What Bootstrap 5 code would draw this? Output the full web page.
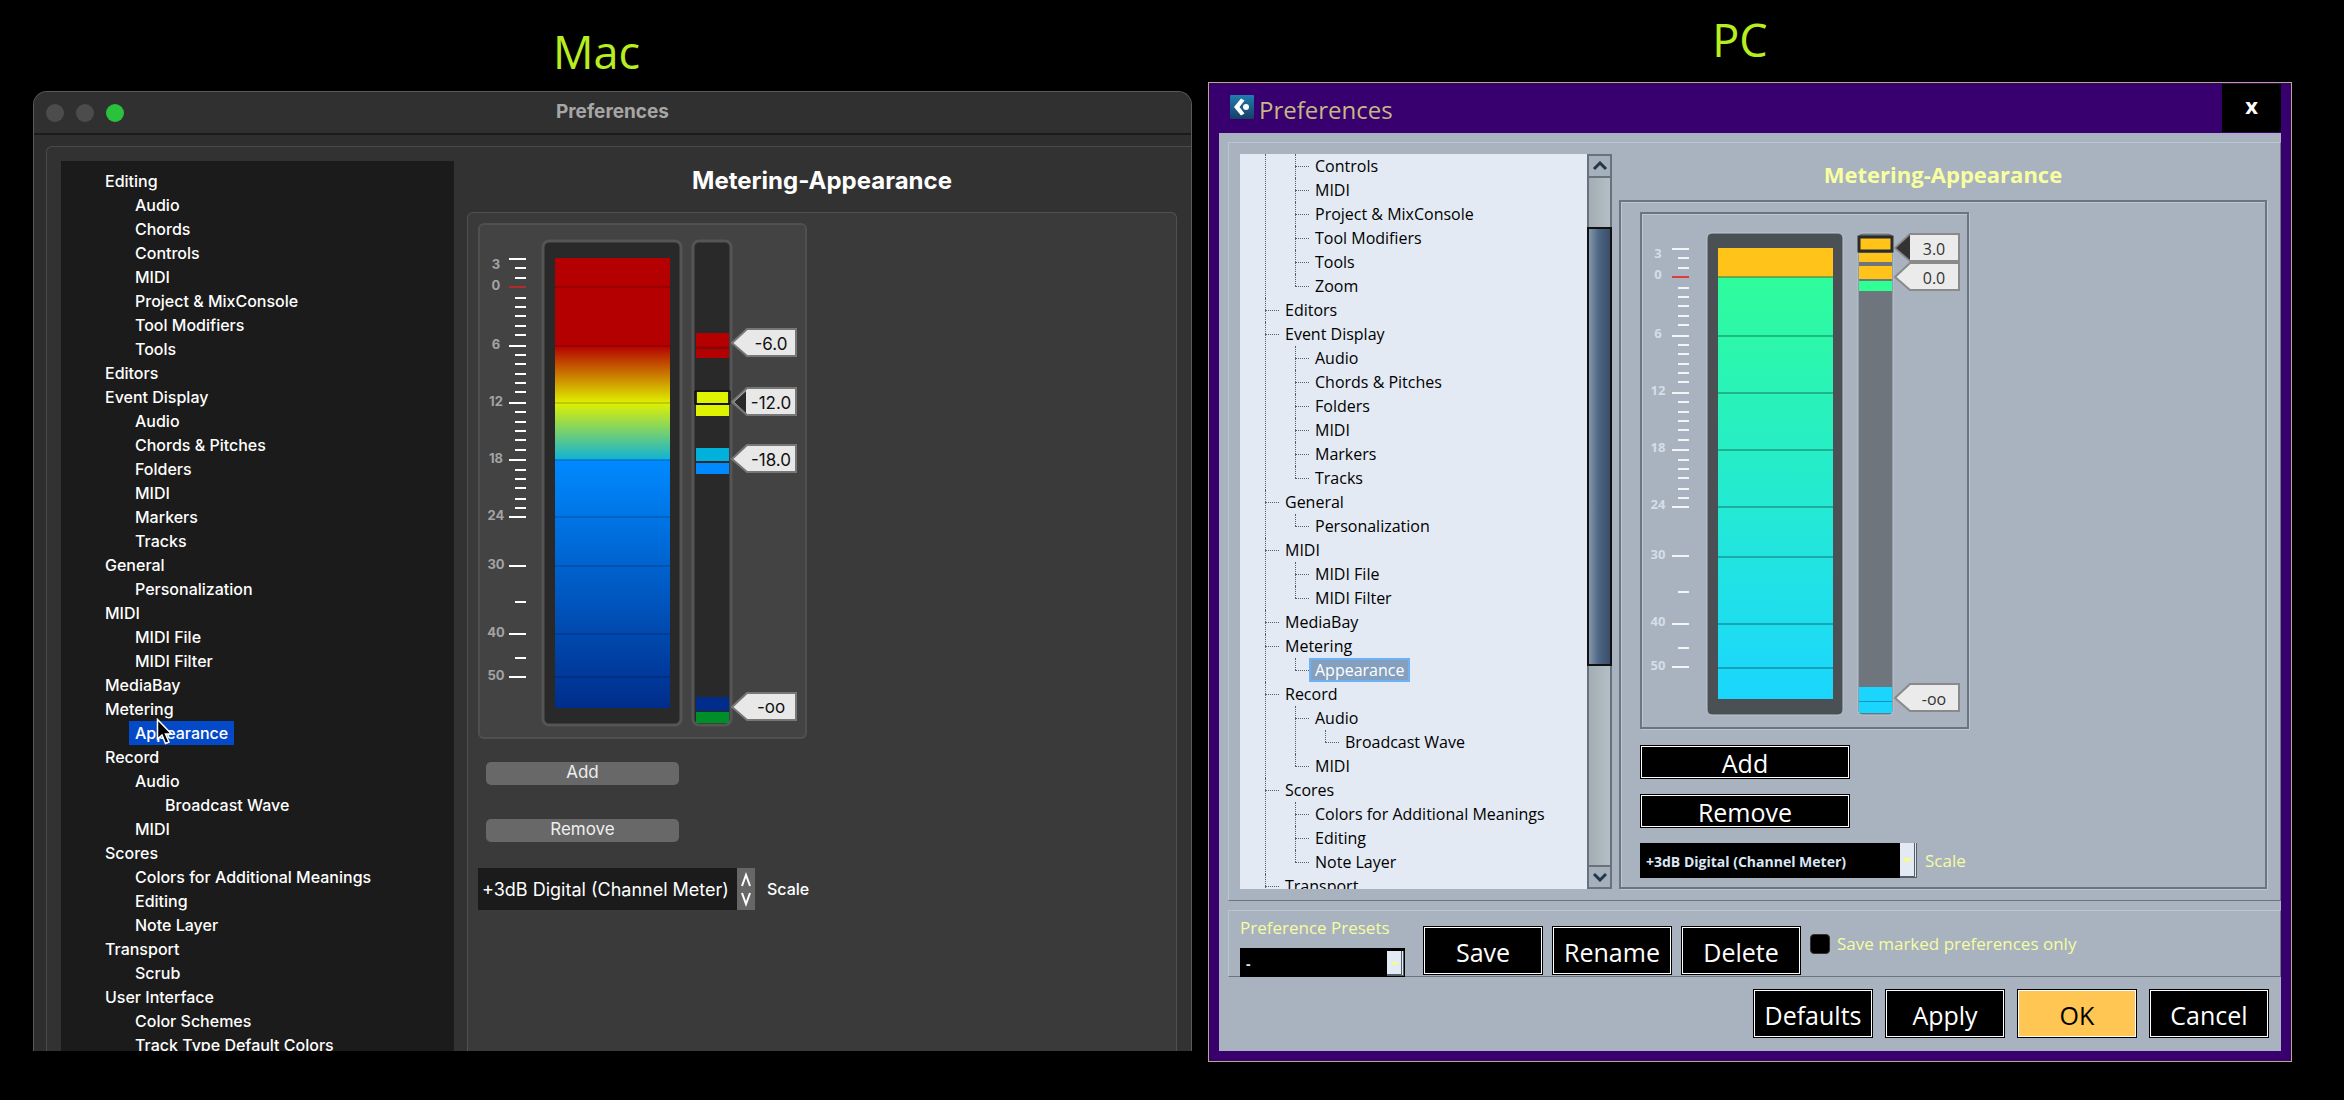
<!DOCTYPE html>
<html lang="en">
<head>
<meta charset="utf-8">
<meta name="viewport" content="width=device-width, initial-scale=1">
<title>Preferences: Mac and PC</title>
<link href="https://cdn.jsdelivr.net/npm/bootstrap@5.3.0/dist/css/bootstrap.min.css" rel="stylesheet">
<script src="https://cdn.jsdelivr.net/npm/bootstrap@5.3.0/dist/js/bootstrap.bundle.min.js"></script>
<style>
body{background:#000;color:#fff;font-family:"Open Sans","Noto Sans",sans-serif;overflow:hidden}
.compare{display:grid;grid-template-columns:1159fr 1084fr;column-gap:16px;padding:0 52px 0 33px;align-items:start}
.os-name{color:#b8ee20;font-size:45px;line-height:60px;margin:0;font-weight:400;text-align:center}
.os-mac .os-name{padding-top:22px;margin-bottom:9px;padding-right:32px}
.os-pc .os-name{padding-top:10px;margin-bottom:12px;padding-right:20px}
ul{list-style:none;margin:0;padding:0}
.tree a{display:inline-block;line-height:24px;height:24px;vertical-align:top;white-space:nowrap;color:inherit;text-decoration:none}
.tree ul{padding-left:30px}

/* Mac window */
.mac-win{font-family:Inter,"Liberation Sans",sans-serif;background:#2e2e2e;border:1px solid #5a5a5a;border-bottom:0;border-radius:14px 14px 0 0;overflow:hidden}
.mac-bar{height:43px;border-bottom:2px solid #1b1b1b;display:grid;grid-template-columns:1fr auto 1fr;align-items:center;padding:0 12px;background:#303030}
.mac-bar h2{font-size:19px;font-weight:700;color:#a6a6a6;margin:0}
.light{width:18px;height:18px;border-radius:50%;background:#4c4c4c;border:0;padding:0}
.light.go{background:#28c23c}
.mac-body{margin:11px 0 0 12px;border:1px solid #4a4a4a;border-right:0;border-bottom:0;border-radius:6px 0 0 0;background:#323232;padding:14px 14px 0 14px}
.mac-tree{width:393px;height:890px;background:#1b1b1b;overflow:hidden;padding:8px 0 0 44px;font-size:16px;font-weight:500}
.mac-tree .picked{background:#0449c8;padding:0 6px;margin-left:-6px}
.mac-pane{margin-left:13px}
.mac-pane h3{font-size:24px;line-height:40px;font-weight:700;margin:0 0 11px;text-align:center}
.mac-panel{border:1px solid #505050;border-bottom:0;border-radius:6px 6px 0 0;background:#3a3a3a;height:839px;padding:10px}
.mac-meter{display:block;width:329px;height:516px;background:#434343;border:2px solid #505050;border-radius:6px}
.mac-btn{display:block;width:193px;height:23px;border:0;border-radius:5px;background:#686868;color:#eee;font-size:17px;line-height:21px;padding:0 0 2px;margin-left:8px}
.mac-combo{height:42px;width:277px}
.mac-combo select{appearance:none;border:0;background:#1b1b1b;color:#fff;font-size:18px;width:259px;padding:0 4px;height:42px}
.mac-combo .spin{width:18px;height:42px;background:#666;display:block}
.mac-scale{font-size:16px;font-weight:500;margin-left:12px}

/* PC window */
.pc-win{border:1px solid #b9aa84;background:#37006e;padding:0 10px 10px}
.pc-bar{height:50px;padding-left:11px}
.pc-bar h2{font-size:24px;line-height:30px;margin:0 0 0 5px;color:#c5b985;font-weight:400}
.pc-close{width:59px;height:48px;margin-top:1px;background:#000;border:0;color:#fff;font-weight:700;font-size:22px;line-height:30px;padding:0 0 6px}
.pc-client{background:#a8b3bf;padding:9px 0 13px 9px;color:#f5fca2}
.pc-group{border:1px solid #bac6d2;border-bottom-color:#6b757f;border-right-color:#6b757f;padding:11px 13px 11px 11px}
.pc-tree{width:347px;height:735px;background:#e3eaf3;color:#000;overflow:hidden;padding:0 0 0 45px;font-size:16px}
.pc-tree li{position:relative}
.pc-tree li::before{content:"";position:absolute;left:-20px;top:12px;width:14px;border-top:1px dotted #555f70}
.pc-tree li::after{content:"";position:absolute;left:-20px;top:0;bottom:0;border-left:1px dotted #555f70}
.pc-tree ul li:last-child::after{bottom:auto;height:12px}
.pc-tree>ul>li:last-child::after{height:24px}
.pc-tree li.above::before{display:none}
.pc-tree .picked{background:#84a0be;color:#fff;outline:2px solid #6fb1f6;outline-offset:-2px;padding:0 6px;margin-left:-6px}
.pc-scroll{width:25px;height:735px}
.pc-scroll button{height:24px;border:2px solid #67727e;background:#a6b0ba;padding:0;display:block;line-height:0}
.pc-scroll .track{background:linear-gradient(90deg,#a3adb4,#b4bec5);border:2px solid #67727e;border-top:0;border-bottom:0}
.pc-scroll .thumb{background:linear-gradient(90deg,#8398ab,#4f6784 45%,#384e6b);border:2px solid #111}
.pc-pane{margin-left:7px}
.pc-pane h3{font-size:22px;line-height:40px;font-weight:700;color:#f8ffa0;margin:0 0 6px;text-align:center}
.pc-panel{border:2px solid #6b757f;box-shadow:inset 1px 1px #bac6d2,1px 1px #bac6d2;height:689px;padding:10px 19px}
.pc-meter{display:block;width:329px;height:517px;border:2px solid #6b757f;box-shadow:inset 1px 1px #bac6d2,1px 1px #bac6d2;margin-bottom:16px}
.pc-btn{display:block;background:#000;color:#fff;border:1px solid #000;outline:1px solid #fff;outline-offset:-2px;font-size:25px;line-height:32px;height:49px;width:120px;padding:2px 0 0;text-align:center}
.pc-btn.wide{width:210px;height:34px;padding:2px 0 0;line-height:30px;margin-bottom:15px}
.pc-btn.go{background:#ffc654;color:#000}
.pc-combo select{appearance:none;border:0;border-radius:0;background:#000;color:#dbe7f6;font-size:14px;font-weight:700;padding:2px 6px 0}
.pc-combo .drop{width:17px;background:#e3eaf3;border-right:3px double #555f66;border-bottom:2px solid #555f66}
.pc-label{font-size:17px;line-height:24px;font-weight:400}
.pc-check{appearance:none;width:20px;height:20px;border-radius:4px;background:#000;border:1px solid #333;margin:0}
.presets{padding:5px 0 0 11px;height:67px;margin-top:9px}
</style>
</head>
<body>
<svg width="0" height="0" class="position-absolute" aria-hidden="true">
  <defs>
    <path id="ticks" d="M30 36h17M36 45h11M36 55h11M36 75h11M36 84h11M36 93h11M36 103h11M36 112h11M30 123h17M36 132h11M36 141h11M36 151h11M36 160h11M36 169h11M30 180h17M36 189h11M36 199h11M36 208h11M36 217h11M36 227h11M30 237h17M36 247h11M36 256h11M36 265h11M36 276h11M36 285h11M30 294h17M30 343h17M36 379h11M30 411h17M36 435h11M30 454h17"/>
    <path id="tag" d="M0 14L15 0H64V27H15Z"/>
    <linearGradient id="macFill" x1="0" y1="0" x2="0" y2="1">
      <stop offset="0" stop-color="#b40000"/><stop offset=".195" stop-color="#b40000"/>
      <stop offset=".322" stop-color="#e0f000"/><stop offset=".447" stop-color="#12b2d6"/>
      <stop offset=".449" stop-color="#008aff"/><stop offset=".58" stop-color="#0074e4"/><stop offset="1" stop-color="#002d8c"/>
    </linearGradient>
    <linearGradient id="pcFill" x1="0" y1="0" x2="0" y2="1">
      <stop offset="0" stop-color="#30ff94"/><stop offset=".65" stop-color="#22e6dc"/><stop offset="1" stop-color="#1ad6ff"/>
    </linearGradient>
    <linearGradient id="logoFill" x1="0" y1="0" x2="0" y2="1"><stop offset="0" stop-color="#1f7fae"/><stop offset="1" stop-color="#163f66"/></linearGradient>
  </defs>
</svg>

<main class="compare">
  <section class="os-mac">
    <h1 class="os-name">Mac</h1>
    <div class="mac-win">
      <header class="mac-bar">
        <div class="d-flex" style="gap:12px">
          <button class="light" aria-label="Close"></button><button class="light" aria-label="Minimize"></button><button class="light go" aria-label="Zoom"></button>
        </div>
        <h2>Preferences</h2><span></span>
      </header>
      <div class="mac-body d-flex">
        <nav class="mac-tree tree flex-shrink-0 position-relative" aria-label="Preference pages">
          <ul class="p-0">
            <li><a href="#">Editing</a><ul><li><a href="#">Audio</a></li><li><a href="#">Chords</a></li><li><a href="#">Controls</a></li><li><a href="#">MIDI</a></li><li><a href="#">Project &amp; MixConsole</a></li><li><a href="#">Tool Modifiers</a></li><li><a href="#">Tools</a></li></ul></li>
            <li><a href="#">Editors</a></li>
            <li><a href="#">Event Display</a><ul><li><a href="#">Audio</a></li><li><a href="#">Chords &amp; Pitches</a></li><li><a href="#">Folders</a></li><li><a href="#">MIDI</a></li><li><a href="#">Markers</a></li><li><a href="#">Tracks</a></li></ul></li>
            <li><a href="#">General</a><ul><li><a href="#">Personalization</a></li></ul></li>
            <li><a href="#">MIDI</a><ul><li><a href="#">MIDI File</a></li><li><a href="#">MIDI Filter</a></li></ul></li>
            <li><a href="#">MediaBay</a></li>
            <li><a href="#">Metering</a><ul><li><a href="#" class="picked">Appearance</a></li></ul></li>
            <li><a href="#">Record</a><ul><li><a href="#">Audio</a><ul><li><a href="#">Broadcast Wave</a></li></ul></li><li><a href="#">MIDI</a></li></ul></li>
            <li><a href="#">Scores</a><ul><li><a href="#">Colors for Additional Meanings</a></li><li><a href="#">Editing</a></li><li><a href="#">Note Layer</a></li></ul></li>
            <li><a href="#">Transport</a><ul><li><a href="#">Scrub</a></li></ul></li>
            <li><a href="#">User Interface</a><ul><li><a href="#">Color Schemes</a></li><li><a href="#">Track Type Default Colors</a></li></ul></li>
          </ul>
          <svg class="position-absolute" style="left:95px;top:557px" width="18" height="28" viewBox="0 0 18 28" aria-hidden="true"><path d="M1.500 1.500V21L6 17L9.500 25.500L13 24L9.500 16H15.500Z" fill="#000" stroke="#fff" stroke-width="1.500"/></svg>
        </nav>
        <section class="mac-pane flex-fill">
          <h3>Metering-Appearance</h3>
          <div class="mac-panel">
            <svg class="mac-meter" viewBox="1 2 325 512" font-family="Inter, sans-serif" role="img" aria-label="Meter colours">
              <g font-size="13" font-weight="700" fill="#a3a3a3" text-anchor="middle"><text x="17" y="46">3</text><text x="17" y="67">0</text><text x="17" y="126">6</text><text x="17" y="183">12</text><text x="17" y="240">18</text><text x="17" y="297">24</text><text x="17" y="346">30</text><text x="17" y="414">40</text><text x="17" y="457">50</text></g>
              <use href="#ticks" stroke="#fff" stroke-width="2"/><path d="M30 64h17" stroke="#b02c2c" stroke-width="2"/>
              <rect x="64" y="18" width="138" height="484" rx="6" fill="#292929" stroke="#555" stroke-width="3"/>
              <rect x="76" y="35" width="115" height="450" fill="url(#macFill)"/>
              <path d="M76 64h115M76 123h115M76 180h115M76 237h115M76 294h115M76 343h115M76 411h115M76 454h115" stroke="#000" stroke-opacity=".3" stroke-width="1"/>
              <rect x="214" y="18" width="38" height="484" rx="6" fill="#292929" stroke="#555" stroke-width="3"/>
              <path d="M217 110h33v14h-33zM217 126h33v9h-33z" fill="#b40000"/><path d="M217 124.500h33" stroke="#900" stroke-width="2"/>
              <path d="M218 169h31v11h-31zM217 182h33v11h-33z" fill="#dff200"/><path d="M216 168h35v13h-35z" fill="none" stroke="#000"/>
              <path d="M217 225h33v13h-33z" fill="#00b1db"/><path d="M217 240h33v11h-33z" fill="#008aff"/>
              <path d="M217 474h33v14h-33z" fill="#002d8c"/><path d="M217 489h33v11h-33z" fill="#008e28"/>
              <g fill="#e8e8e8" stroke="#777" stroke-width="2"><use href="#tag" x="253" y="106"/><use href="#tag" x="253" y="165"/><use href="#tag" x="253" y="222"/><use href="#tag" x="253" y="470"/></g>
              <path d="M255 179L267 168V190Z" fill="#2a2a2a"/>
              <g font-size="17" fill="#111" text-anchor="middle"><text x="292" y="127">-6.0</text><text x="292" y="186">-12.0</text><text x="292" y="243">-18.0</text><text x="292" y="490">-oo</text></g>
            </svg>
            <button class="mac-btn" style="margin-top:23px">Add</button>
            <button class="mac-btn" style="margin-top:34px">Remove</button>
            <div class="d-flex align-items-center" style="margin-top:26px">
              <div class="mac-combo d-flex"><select id="macScale"><option>+3dB Digital (Channel Meter)</option></select>
              <svg class="spin" viewBox="0 0 18 42" fill="none" stroke="#fff" stroke-width="2" aria-hidden="true"><path d="M5 18L9 7L13 18M5 25L9 36L13 25"/></svg></div>
              <label for="macScale" class="mac-scale">Scale</label>
            </div>
          </div>
        </section>
      </div>
    </div>
  </section>

  <section class="os-pc">
    <h1 class="os-name">PC</h1>
    <div class="pc-win">
      <header class="pc-bar d-flex align-items-start">
        <svg width="24" height="24" viewBox="0 0 24 24" style="margin-top:12px" aria-hidden="true"><rect width="24" height="24" rx="1" fill="url(#logoFill)"/><path d="M11 3.500L4 12L11 20.500L14.500 18.500L9.500 12L14.500 5.500Z" fill="#fff"/><circle cx="16" cy="12" r="3" fill="#fff"/></svg>
        <h2 class="mt-2 pt-1">Preferences</h2>
        <button class="pc-close ms-auto" aria-label="Close">x</button>
      </header>
      <div class="pc-client">
        <div class="pc-group d-flex">
          <nav class="pc-tree tree flex-shrink-0" aria-label="Preference pages">
            <ul class="p-0">
              <li class="above"><ul><li><a href="#">Controls</a></li><li><a href="#">MIDI</a></li><li><a href="#">Project &amp; MixConsole</a></li><li><a href="#">Tool Modifiers</a></li><li><a href="#">Tools</a></li><li><a href="#">Zoom</a></li></ul></li>
              <li><a href="#">Editors</a></li>
              <li><a href="#">Event Display</a><ul><li><a href="#">Audio</a></li><li><a href="#">Chords &amp; Pitches</a></li><li><a href="#">Folders</a></li><li><a href="#">MIDI</a></li><li><a href="#">Markers</a></li><li><a href="#">Tracks</a></li></ul></li>
              <li><a href="#">General</a><ul><li><a href="#">Personalization</a></li></ul></li>
              <li><a href="#">MIDI</a><ul><li><a href="#">MIDI File</a></li><li><a href="#">MIDI Filter</a></li></ul></li>
              <li><a href="#">MediaBay</a></li>
              <li><a href="#">Metering</a><ul><li><a href="#" class="picked">Appearance</a></li></ul></li>
              <li><a href="#">Record</a><ul><li><a href="#">Audio</a><ul><li><a href="#">Broadcast Wave</a></li></ul></li><li><a href="#">MIDI</a></li></ul></li>
              <li><a href="#">Scores</a><ul><li><a href="#">Colors for Additional Meanings</a></li><li><a href="#">Editing</a></li><li><a href="#">Note Layer</a></li></ul></li>
              <li><a href="#">Transport</a></li>
            </ul>
          </nav>
          <div class="pc-scroll d-flex flex-column flex-shrink-0">
            <button aria-label="Scroll up"><svg width="16" height="10" viewBox="0 0 16 10" fill="none" stroke="#24384c" stroke-width="3"><path d="M2 8L8 2L14 8"/></svg></button>
            <div class="track" style="height:49px"></div><div class="thumb" style="height:439px"></div><div class="track flex-fill"></div>
            <button aria-label="Scroll down"><svg width="16" height="10" viewBox="0 0 16 10" fill="none" stroke="#24384c" stroke-width="3"><path d="M2 2L8 8L14 2"/></svg></button>
          </div>
          <section class="pc-pane flex-fill">
            <h3>Metering-Appearance</h3>
            <div class="pc-panel">
              <svg class="pc-meter" viewBox="2 2 325 513" font-family="Open Sans, sans-serif" role="img" aria-label="Meter colours">
                <g font-size="13" font-weight="700" fill="#d6dde4" text-anchor="middle"><text x="18" y="46">3</text><text x="18" y="67">0</text><text x="18" y="126">6</text><text x="18" y="183">12</text><text x="18" y="240">18</text><text x="18" y="297">24</text><text x="18" y="347">30</text><text x="18" y="414">40</text><text x="18" y="458">50</text></g>
                <use href="#ticks" x="2" y="1" stroke="#f2f4f6" stroke-width="2"/><path d="M32 65h17" stroke="#e03c3c" stroke-width="2"/>
                <rect x="67" y="21" width="136" height="482" rx="5" fill="#4b5054" stroke="#bac6d2"/>
                <rect x="78" y="36" width="115" height="451" fill="url(#pcFill)"/><rect x="78" y="36" width="115" height="29" fill="#ffc31a"/>
                <path d="M78 65h115M78 124h115M78 181h115M78 238h115M78 295h115M78 345h115M78 412h115M78 456h115" stroke="#000" stroke-opacity=".25" stroke-width="2"/>
                <rect x="218" y="21" width="35" height="482" rx="4" fill="#6e757d" stroke="#bac6d2"/>
                <path d="M219 25h33v14h-33z" fill="#ffc31a" stroke="#2b2b2b" stroke-width="3"/>
                <path d="M219 41h33v9h-33zM219 54h33v13h-33z" fill="#ffc31a"/><path d="M219 69h33v10h-33z" fill="#30ff94"/>
                <path d="M219 475h33v14h-33zM219 490h33v11h-33z" fill="#1ad6ff"/><path d="M219 489.500h33" stroke="#1a90ae"/>
                <g fill="#ebebeb" stroke="#8a8a8a" stroke-width="2"><use href="#tag" x="255" y="22"/><use href="#tag" x="255" y="51"/><use href="#tag" x="255" y="472"/></g>
                <path d="M256 36L270 23V48Z" fill="#333"/>
                <g font-size="16" fill="#333" text-anchor="middle"><text x="294" y="43">3.0</text><text x="294" y="72">0.0</text><text x="294" y="493">-oo</text></g>
              </svg>
              <button class="pc-btn wide">Add</button>
              <button class="pc-btn wide">Remove</button>
              <div class="d-flex align-items-center">
                <div class="pc-combo d-flex"><select id="pcScale" style="width:260px;height:35px"><option>+3dB Digital (Channel Meter)</option></select>
                <svg class="drop" height="35" viewBox="0 0 14 33" aria-hidden="true"><path d="M2 15H12L7 20Z" fill="#f5fc8c"/></svg></div>
                <label for="pcScale" class="pc-label ms-2">Scale</label>
              </div>
            </div>
          </section>
        </div>
        <div class="pc-group presets d-flex align-items-start">
          <div style="width:183px">
            <label for="preset" class="pc-label d-block mb-1">Preference Presets</label>
            <div class="pc-combo d-flex bg-black mt-2" style="width:165px;height:29px"><select id="preset" class="flex-fill"><option>-</option></select>
            <svg class="drop" width="20" height="25" viewBox="0 0 17 24" style="margin:3px 1px 1px" aria-hidden="true"><path d="M4 11H14L9 16Z" fill="#f5fc8c"/></svg></div>
          </div>
          <div class="d-flex" style="gap:9px;padding-top:10px"><button class="pc-btn">Save</button><button class="pc-btn">Rename</button><button class="pc-btn">Delete</button></div>
          <div class="d-flex align-items-center" style="margin:16px 0 0 9px"><input type="checkbox" class="pc-check" id="marked"><label for="marked" class="pc-label" style="margin-left:7px">Save marked preferences only</label></div>
        </div>
        <div class="d-flex justify-content-end" style="gap:12px;padding:12px 12px 0 0"><button class="pc-btn">Defaults</button><button class="pc-btn">Apply</button><button class="pc-btn go">OK</button><button class="pc-btn">Cancel</button></div>
      </div>
    </div>
  </section>
</main>
</body>
</html>
